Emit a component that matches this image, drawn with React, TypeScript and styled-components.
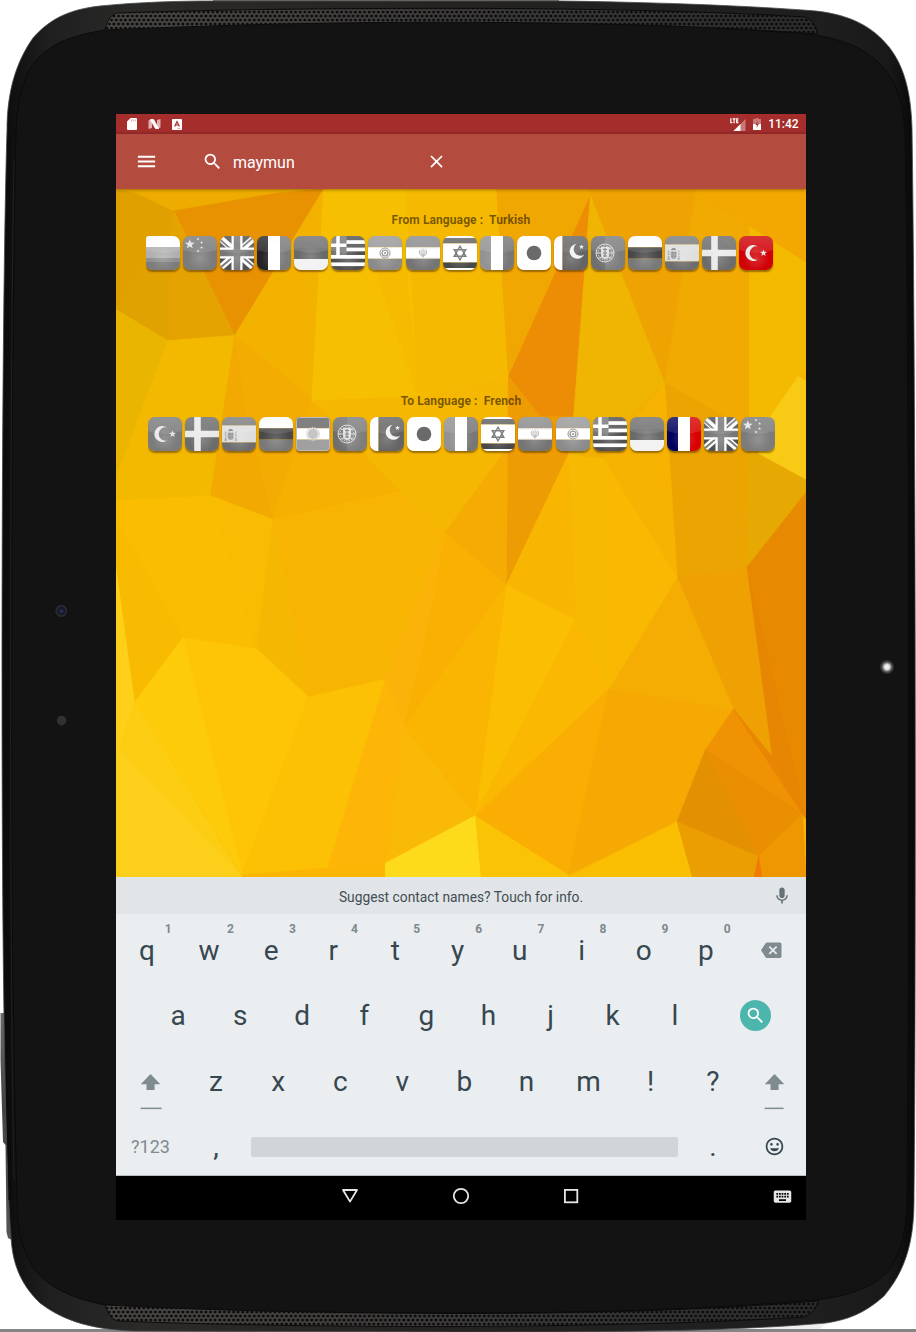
import React from "react";
import styled, { createGlobalStyle } from "styled-components";
import {
  MdMenu,
  MdSearch,
  MdClose,
  MdBackspace,
  MdMood,
  MdKeyboard,
} from "react-icons/md";

const GlobalStyle = createGlobalStyle`
  * { box-sizing: border-box; }
  html, body { margin: 0; padding: 0; background: #fff; }
  body { font-family: Roboto, "Liberation Sans", sans-serif; overflow: hidden; }
  svg { display: block; }
`;

const Device = styled.div`
  display: grid;
  width: 916px;
  height: 1332px;
  overflow: hidden;
`;

const FrameArt = styled.svg`
  grid-area: 1 / 1;
`;

const Screen = styled.main`
  grid-area: 1 / 1;
  z-index: 1;
  margin: 114px 0 0 116px;
  width: 690px;
  height: 1106px;
  display: flex;
  flex-direction: column;
  background: #000;
  overflow: hidden;
`;

const StatusBar = styled.div`
  height: 20px;
  flex: none;
  display: flex;
  align-items: center;
  justify-content: space-between;
  padding: 0 7.4px 0 11px;
  background: linear-gradient(#a52e2d 80%, #8f2928);
`;

const StatusGroup = styled.div<{ $gap: number }>`
  display: flex;
  align-items: center;
  gap: ${(p) => p.$gap}px;
`;

const Clock = styled.span`
  color: #fff;
  font-size: 12px;
  font-weight: 500;
  line-height: 20px;
`;

const AppBar = styled.header`
  height: 55px;
  flex: none;
  z-index: 1;
  display: flex;
  align-items: center;
  padding-left: 19px;
  color: #fff;
  background: #b44b3f;
  box-shadow: 0 1px 3px rgba(60, 30, 0, 0.45);
`;

const SearchField = styled.div`
  display: flex;
  align-items: center;
  width: 245.5px;
  margin-left: 43.6px;
  font-size: 16px;
`;

const Query = styled.span`
  flex: 1;
  padding: 1px 0 0 10.3px;
`;

const Content = styled.section`
  height: 688px;
  flex: none;
  display: grid;
`;

const Wallpaper = styled.svg`
  grid-area: 1 / 1;
  width: 690px;
  height: 688px;
`;

const Pickers = styled.div`
  grid-area: 1 / 1;
  z-index: 1;
  display: flex;
  flex-direction: column;
  gap: 121.7px;
  padding-top: 22.6px;
`;

const Picker = styled.div`
  display: flex;
  flex-direction: column;
  gap: 8.4px;
  height: 59.4px;
`;

const PickerLabel = styled.div`
  height: 16px;
  line-height: 16px;
  text-align: center;
  white-space: pre;
  font-size: 12px;
  font-weight: 700;
  letter-spacing: 0.1px;
  color: rgba(30, 20, 0, 0.6);
`;

const FlagStrip = styled.div<{ $start: number; $width: number }>`
  display: flex;
  gap: 3.06px;
  margin-left: ${(p) => p.$start}px;
  width: ${(p) => p.$width}px;
  padding-bottom: 4px;
  overflow: hidden;
  flex: none;
`;

const FlagTile = styled.span<{ $radius?: string }>`
  flex: none;
  width: 34px;
  height: 34px;
  border-radius: ${(p) => p.$radius ?? "7px"};
  overflow: hidden;
  box-shadow: 0 1.5px 1.5px rgba(70, 40, 0, 0.5);
`;

const Keyboard = styled.section`
  height: 299px;
  flex: none;
  display: flex;
  flex-direction: column;
  background: #eaeef1;
  box-shadow: inset 0 -1px #b9bec1;
`;

const Suggestion = styled.div`
  height: 37px;
  flex: none;
  display: grid;
  grid-template-columns: 48px 1fr 48px;
  align-items: center;
  justify-items: center;
  padding-top: 1px;
  background: #e1e5e8;
  color: #414d53;
  font-size: 13.8px;
`;

const MicSlot = styled.span`
  grid-column: 3;
  color: #667277;
`;

const SuggestionText = styled.span`
  grid-column: 2;
  padding-top: 2px;
`;

const KeyRow = styled.div<{ $indent?: number }>`
  height: 65.5px;
  display: flex;
  padding-left: ${(p) => p.$indent ?? 0}px;
`;

const Key = styled.div`
  position: relative;
  width: 62.1px;
  display: flex;
  align-items: center;
  justify-content: center;
  padding-top: 7px;
  font-size: 28px;
  color: #37474f;
`;

const Hint = styled.sup`
  position: absolute;
  right: 6.4px;
  top: 8px;
  line-height: 14px;
  font-size: 12px;
  font-weight: 700;
  color: #7d898d;
`;

const ActionKey = styled.div<{ $width: number; $dark?: boolean }>`
  width: ${(p) => p.$width}px;
  display: flex;
  align-items: center;
  justify-content: center;
  padding-top: 7px;
  font-size: 18px;
  color: ${(p) => (p.$dark ? "#37474f" : "#7f8b8f")};
`;

const ShiftKey = styled(ActionKey)`
  align-items: flex-end;
  padding-top: 0;
`;

const SpaceKey = styled.div`
  width: 434.7px;
  padding: 26px 4px 0 3.8px;

  &::before {
    content: "";
    display: block;
    height: 20.4px;
    border-radius: 2px;
    background: #d0d5d8;
  }
`;

const EnterButton = styled.span`
  display: flex;
  align-items: center;
  justify-content: center;
  width: 31px;
  height: 31px;
  border-radius: 50%;
  background: #4db6ac;
  color: #fff;
`;

const NavBar = styled.nav`
  height: 44px;
  flex: none;
  display: grid;
  grid-template-columns: 179px repeat(3, 110.4px) 1fr;
  align-items: center;
  justify-items: center;
  padding-bottom: 4px;
  background: #000;
  color: #e6e6e6;
`;

const NavSlot = styled.span<{ $column: number; $end?: boolean }>`
  grid-column: ${(p) => p.$column};
  justify-self: ${(p) => (p.$end ? "end" : "center")};
  padding-right: ${(p) => (p.$end ? 13 : 0)}px;
`;

const outline =
  "M7 130C7 92 16 62 33 38C52 16 74 9 100 6C140 2 180 1 213 1L559 1C640 2 740 5 816 11C850 15 872 26 889 47C904 66 911 92 912 128C916 400 916 1000 914 1200C914 1245 904 1272 884 1296C864 1314 846 1320 826 1323C720 1332 600 1332 456 1332L133 1331C85 1329 60 1318 40 1303C20 1284 12 1262 11 1236C4 1150 2 900 2 680C2 430 4 230 7 130Z";
const face =
  "M16 130C17 108 20 90 28 72C44 44 70 36 105 30C200 24 320 22 456 22C600 22 720 26 816 35C856 42 878 56 893 81C902 100 904 116 905 134C910 400 909 1000 907 1200C906 1232 902 1250 889 1270C874 1288 848 1296 816 1300C700 1310 580 1313 456 1313C320 1313 200 1311 105 1305C70 1298 46 1286 33 1267C21 1247 17 1230 17 1200C12 1000 11 800 12 600C12 400 14 240 16 130Z";
const topGrill =
  "M105 30C107 22 110 14 118 13C220 9.5 330 8.3 456 8.3C580 8.5 710 11 805 17C812 19 816 27 818 34C710 26 590 22.5 456 22.3C330 22 220 25 105 30Z";
const bottomGrill =
  "M105 1305C108 1314 112 1321 120 1321C220 1325 330 1326.5 456 1326.5C580 1326 710 1323 804 1317C812 1314 816 1308 819 1301C710 1310 590 1313.5 456 1313.5C330 1313 220 1311 105 1305Z";

function TabletFrame() {
  return (
    <FrameArt width="916" height="1332" viewBox="0 0 916 1332">
      <defs>
        <linearGradient id="shell" x1="0" y1="0" x2="1" y2="0">
          <stop offset="0" stopColor="#0b0b0b" />
          <stop offset="0.05" stopColor="#1f1f1f" />
          <stop offset="0.15" stopColor="#2b2a29" />
          <stop offset="0.5" stopColor="#242322" />
          <stop offset="0.9" stopColor="#1e1e1e" />
          <stop offset="0.97" stopColor="#191919" />
          <stop offset="1" stopColor="#070707" />
        </linearGradient>
        <linearGradient id="mesh" x1="0" y1="0" x2="1" y2="0">
          <stop offset="0" stopColor="#4c4947" />
          <stop offset="0.5" stopColor="#403e3d" />
          <stop offset="1" stopColor="#2e2e2e" />
        </linearGradient>
        <linearGradient id="rocker" x1="0" y1="0" x2="0" y2="1">
          <stop offset="0" stopColor="#6a6a6a" />
          <stop offset="0.4" stopColor="#444" />
          <stop offset="1" stopColor="#555" />
        </linearGradient>
        <pattern id="holes" width="4.6" height="8" patternUnits="userSpaceOnUse" y="2">
          <circle cx="1.2" cy="2" r="1.5" fill="#0b0b0b" />
          <circle cx="3.5" cy="6" r="1.5" fill="#0b0b0b" />
          <circle cx="-1.1" cy="6" r="1.5" fill="#0b0b0b" />
          <circle cx="5.8" cy="2" r="1.5" fill="#0b0b0b" />
        </pattern>
        <radialGradient id="led">
          <stop offset="0" stopColor="#fff" />
          <stop offset="0.35" stopColor="#ddd" />
          <stop offset="0.65" stopColor="#555" />
          <stop offset="1" stopColor="#131313" />
        </radialGradient>
      </defs>
      <rect y="1329" width="916" height="3" fill="#858585" />
      <path d="M213 0H559V3H213Z" fill="#747674" />
      <path d="M769 1327L826 1323L820 1329H760Z" fill="#eee" />
      <path d="M0.5 1013H6V1100L12 1240L8 1238L6.5 1232L5.5 1145L3 1142L0.5 1060Z" fill="url(#rocker)" />
      <path d={outline} fill="url(#shell)" stroke="#4a4a4a" strokeWidth="0.8" />
      <path d="M9 140C6 300 6 900 10 1200" fill="none" stroke="#0c0c0c" strokeWidth="3" />
      <path d={face} fill="#131313" stroke="#0b0b0b" strokeWidth="1" />
      <path d="M14 160C10 400 9 900 14 1180" fill="none" stroke="#242424" strokeWidth="1.2" opacity="0.8" />
      <path d={topGrill} fill="url(#mesh)" stroke="#0b0b0b" />
      <path d={topGrill} fill="url(#holes)" />
      <path d={bottomGrill} fill="url(#mesh)" stroke="#0b0b0b" />
      <path d={bottomGrill} fill="url(#holes)" />
      <circle cx="61.3" cy="611" r="5.2" fill="#171a24" stroke="#2a2d36" strokeWidth="1.6" />
      <circle cx="61.3" cy="611" r="2" fill="#2a2a55" />
      <circle cx="61.6" cy="720.6" r="4.8" fill="#323030" />
      <circle cx="887" cy="667" r="7.5" fill="url(#led)" />
    </FrameArt>
  );
}

/* Facets of the low-poly background, as [points, fill]. */
const facets: [string, string][] = [
  ["0,20 45,28 132,69 125,110 0,290", "#dfa000"],
  ["0,290 125,95 118,360", "#e0a200"],
  ["0,20 472,20 360,32 132,69 45,28", "#eeac00"],
  ["132,69 360,30 472,20 270,348", "#e99201"],
  ["130,69 270,348 118,360 125,110", "#e4a301"],
  ["0,290 118,360 0,665", "#eab500"],
  ["118,360 270,348 215,707 0,718 0,665", "#f3b900"],
  ["472,20 270,348 380,435 445,490", "#f4b200"],
  ["270,348 300,540 357,760 215,707", "#f2a902"],
  ["270,348 380,435 445,490 357,760 300,540", "#f3ad02"],
  ["472,20 865,20 880,200 892,440 687,485 445,495", "#f7bf02"],
  ["590,200 660,200 687,485", "#f6bb01"],
  ["660,20 865,20 892,440 687,485", "#f6b901"],
  ["445,495 687,485 892,440 890,600 748,790 645,697", "#f6b702"],
  ["445,495 645,697 357,760", "#f6b001"],
  ["865,20 1078,20 1078,35 892,440", "#f1a702"],
  ["1078,35 892,440 965,530 1040,530", "#ed8d05"],
  ["892,440 965,530 1040,530 1028,615 887,907", "#ee9c03"],
  ["748,790 890,600 887,907", "#f5ab03"],
  ["1078,20 1318,20 1318,35 1247,455 1078,35", "#eea302"],
  ["1078,35 1247,455 1107,625 1028,615 1040,530", "#efb502"],
  ["1247,455 1107,625 1060,618", "#f2b002"],
  ["1318,30 1440,100 1440,560 1247,455", "#f1aa02"],
  ["1318,20 1568,20 1568,185 1318,30", "#f2a701"],
  ["1440,105 1568,185 1568,430 1550,440 1480,540 1440,540", "#f4ba00"],
  ["1247,455 1440,560 1433,868 1275,890", "#eba402"],
  ["1247,455 1107,625 1275,890", "#f6b302"],
  ["1440,540 1480,540 1460,612 1568,670 1568,700 1433,868", "#e6a903"],
  ["1550,440 1568,450 1568,670 1460,612 1480,540", "#f8ca15"],
  ["1433,868 1568,700 1568,1430 1403,1185", "#e78a02"],
  ["1433,868 1568,1430 1490,1290", "#e68602"],
  ["1275,890 1433,868 1490,1290 1403,1185", "#efa003"],
  ["1275,890 1403,1185 1120,1140", "#f5ad03"],
  ["1107,625 1275,890 1120,1140 1115,960", "#f9b902"],
  ["1028,615 1107,625 1115,960 1120,1140 1045,985", "#f8b902"],
  ["887,907 1028,615 1045,985", "#f8b602"],
  ["887,907 1045,985 817,1423", "#fbbe02"],
  ["1045,985 1120,1140 817,1423", "#fab802"],
  ["0,718 215,707 320,1050 152,1025 0,760", "#fbbd02"],
  ["215,707 357,760 320,1050", "#f9bc02"],
  ["357,760 645,697 748,790 612,1118 437,1158", "#f8b403"],
  ["357,760 437,1158 320,1050", "#f6b702"],
  ["748,790 720,950 655,1225 612,1118", "#fbb30a"],
  ["748,790 887,907 655,1225 720,950", "#fab002"],
  ["887,907 655,1225 817,1423", "#fab502"],
  ["0,760 152,1025 42,1170 0,870", "#f9bb02"],
  ["0,870 42,1170 0,1300", "#fed01a"],
  ["152,1025 320,1050 437,1158 287,1557", "#fec507"],
  ["152,1025 42,1170 287,1557", "#fdcb0a"],
  ["42,1170 287,1561 0,1561 0,1300", "#fccd12"],
  ["0,1270 287,1561 0,1561", "#fbcf1a"],
  ["437,1158 612,1118 612,1530 287,1557", "#fcc005"],
  ["612,1118 655,1225 612,1530 480,1545", "#fdb607"],
  ["655,1225 817,1423 612,1530", "#fab807"],
  ["287,1557 612,1530 612,1561 287,1561", "#fcb504"],
  ["612,1530 817,1423 830,1561 612,1561", "#fddb1b"],
  ["817,1423 1028,1555 1028,1561 830,1561", "#fbc305"],
  ["817,1423 1120,1140 1028,1555", "#faae03"],
  ["1120,1140 1403,1185 1340,1275 1275,1437 1028,1555", "#f6a902"],
  ["1275,1437 1310,1561 1028,1561", "#fabe03"],
  ["1275,1437 1340,1275 1460,1515", "#e39002"],
  ["1340,1275 1403,1185 1560,1420", "#ef9203"],
  ["1340,1275 1560,1420 1460,1515", "#ea8f02"],
  ["1403,1185 1490,1290 1568,1430 1560,1420", "#e98604"],
  ["1275,1437 1460,1515 1450,1561 1310,1561", "#eb9e02"],
  ["1460,1515 1560,1420 1568,1561 1468,1561", "#ef9702"],
  ["1460,1515 1468,1561 1450,1561", "#f17a04"],
];

function Background() {
  return (
    <Wallpaper viewBox="0 20 1568 1541" preserveAspectRatio="none">
      <rect y="20" width="1568" height="1541" fill="#f7b502" />
      {facets.map(([points, fill], i) => (
        <polygon key={i} points={points} fill={fill} stroke={fill} strokeWidth="1.5" />
      ))}
    </Wallpaper>
  );
}

const Star = ({ x, y, r, fill = "#e4e4e4" }: { x: number; y: number; r: number; fill?: string }) => {
  const pts = Array.from({ length: 10 }, (_, i) => {
    const a = -Math.PI / 2 + (i * Math.PI) / 5;
    const q = i % 2 ? r * 0.42 : r;
    return `${(x + q * Math.cos(a)).toFixed(2)},${(y + q * Math.sin(a)).toFixed(2)}`;
  }).join(" ");
  return <polygon points={pts} fill={fill} />;
};

const bands = (colors: string[], stops: number[], vertical = false) =>
  colors.map((c, i) =>
    vertical ? (
      <rect key={i} x={stops[i]} width={stops[i + 1] - stops[i]} height="34" fill={c} />
    ) : (
      <rect key={i} y={stops[i]} width="34" height={stops[i + 1] - stops[i]} fill={c} />
    )
  );

const Crescent = () => (
  <path d="M19 10.5A8 8 0 1 0 19 23.5A6.7 6.7 0 1 1 19 10.5Z" fill="#e8e8e8" />
);

const flagArt: Record<string, React.ReactNode> = {
  argentinaCut: bands(["#fff", "#b0b0b0", "#8f8f8f", "#7c7c7c"], [0, 11, 22, 26, 34]),
  china: (
    <>
      <rect width="34" height="34" fill="#7b7b7b" />
      <Star x={6.8} y={8.3} r={5} />
      <Star x={15} y={3} r={1.6} />
      <Star x={18.6} y={6.5} r={1.6} />
      <Star x={18.6} y={11.5} r={1.6} />
      <Star x={15} y={15} r={1.6} />
    </>
  ),
  uk: (
    <>
      <rect width="34" height="34" fill="#505050" />
      <path d="M0 2L34 32M34 2L0 32" stroke="#fff" strokeWidth="6.5" />
      <path d="M0 3.5L14 16M34 1L20 13M0 32L14 20M34 31L20 19" stroke="#777" strokeWidth="1.8" />
      <path d="M17 0V34M0 17H34" stroke="#fff" strokeWidth="11" />
      <path d="M17 0V34M0 17H34" stroke="#777" strokeWidth="6.5" />
    </>
  ),
  franceGray: bands(["#252525", "#fff", "#7b7b7b"], [0, 11, 23, 34], true),
  france: bands(["#00005e", "#fff", "#d90000"], [0, 11, 23, 34], true),
  germany: bands(["#707070", "#6a6a6a", "#f2f2f2"], [0, 12, 23, 34]),
  greece: (
    <>
      <rect width="34" height="34" fill="#505050" />
      {[4.2, 11.6, 19, 26.4].map((y) => (
        <rect key={y} y={y} width="34" height="3.7" fill="#fff" />
      ))}
      <rect width="15.5" height="19" fill="#777" />
      <path d="M7 0V19M0 9.3H15.5" stroke="#fff" strokeWidth="3.5" />
    </>
  ),
  india: (
    <>
      {bands(["#999", "#fff", "#8a8a8a"], [0, 11.3, 22.7, 34])}
      <g fill="none" stroke="#888">
        <circle cx="17" cy="17" r="5" strokeWidth="1" />
        <circle cx="17" cy="17" r="2.9" strokeWidth="1.3" />
      </g>
      <circle cx="17" cy="17" r="1" fill="#777" />
    </>
  ),
  iran: (
    <>
      {bands(["#8c8c8c", "#fff", "#747474"], [0, 11.3, 22.7, 34])}
      <path d="M0 11.8H34M0 22.2H34" stroke="#ccc" strokeWidth="1" strokeDasharray="1 1" />
      <path d="M14.2 13.5Q11.5 18 16.8 20.5Q22.4 18 19.8 13.5M17 12.6V21.4M15.5 14.5Q14 18 17 19.2Q20 18 18.5 14.5" fill="none" stroke="#999" strokeWidth="0.8" />
    </>
  ),
  israel: (
    <>
      {bands(["#fff", "#606060", "#fff", "#484848", "#fff"], [0, 2, 7.5, 26.5, 32, 34])}
      <path d="M17 10.2L22.8 20.3H11.2ZM17 23.8L11.2 13.7H22.8Z" fill="none" stroke="#6c6c6c" strokeWidth="1.4" />
    </>
  ),
  italy: bands(["#929292", "#fff", "#777"], [0, 11, 23, 34], true),
  japan: (
    <>
      <rect width="34" height="34" fill="#fff" />
      <circle cx="17" cy="17" r="7.3" fill="#6a6a6a" />
    </>
  ),
  pakistan: (
    <>
      {bands(["#fff", "#646464"], [0, 8.5, 34], true)}
      <path d="M22.5 7.8A7.5 7.5 0 1 0 30 18.5A6.4 6.4 0 1 1 22.5 7.8Z" fill="#f2f2f2" />
      <Star x={27.5} y={11} r={2.6} fill="#f2f2f2" />
    </>
  ),
  portugal: (
    <>
      {bands(["#6e6e6e", "#7d7d7d"], [0, 14, 34], true)}
      <g fill="none" stroke="#ddd" strokeWidth="1">
        <circle cx="14" cy="17" r="9" />
        <circle cx="14" cy="17" r="7" strokeDasharray="1.6 1" />
        <path d="M5 17H23M7 11.5Q14 15.5 21 11.5M7 22.5Q14 18.5 21 22.5" />
      </g>
      <path d="M10 11H18V19Q18 23 14 23Q10 23 10 19Z" fill="#ddd" />
      <path d="M12 13.5H16M12 17H16M12 20H16M14 12V21" stroke="#777" strokeWidth="1.2" />
    </>
  ),
  russia: bands(["#fff", "#484848", "#787878"], [0, 11.3, 22.6, 34]),
  spain: (
    <>
      {bands(["#7c7c7c", "#dedede", "#6d6d6d"], [0, 8.5, 25.5, 34])}
      <path d="M3.6 14.5V22.5M13.8 14.5V22.5" stroke="#aaa" strokeWidth="1.4" strokeDasharray="2 0.8" />
      <path d="M2.4 23H5M12.6 23H15" stroke="#888" />
      <path d="M5.8 15.5H11.6V20Q11.6 23 8.6 23Q5.8 23 5.8 20Z" fill="#a4a4a4" />
      <path d="M6.4 13.6Q8.6 11 11 13.6ZM6.8 17H8.2M9.6 17H11M6.8 20.2H8.2M9.6 20.2H11" fill="#8a8a8a" stroke="#777" strokeWidth="0.9" />
    </>
  ),
  sweden: (
    <>
      <rect width="34" height="34" fill="#6c6c6c" />
      <path d="M12.5 0V34M0 17H34" stroke="#e9e9e9" strokeWidth="6.6" />
    </>
  ),
  turkeyGray: (
    <>
      <rect width="34" height="34" fill="#7b7b7b" />
      <Crescent />
      <Star x={24.5} y={17} r={3.6} />
    </>
  ),
  turkey: (
    <>
      <rect width="34" height="34" fill="#d00006" />
      <Crescent />
      <Star x={24.5} y={17} r={3.6} />
    </>
  ),
  argentina: (
    <>
      {bands(["#808080", "#fff", "#a0a0a0"], [0, 11.3, 22.6, 34])}
      <circle cx="17" cy="17" r="5" fill="#c4c4c4" />
      <circle cx="17" cy="17" r="6" fill="none" stroke="#d0d0d0" strokeWidth="2.4" strokeDasharray="1.2 1" />
      <rect x="0.5" y="0.5" width="33" height="33" rx="3" fill="none" stroke="#bbb" />
    </>
  ),
};

function Flag({ name }: { name: string }) {
  const radius = name === "argentina" ? "4px" : name === "argentinaCut" ? "3px 7px 7px 6px" : undefined;
  const flat = name === "japan" || name === "argentina";
  return (
    <FlagTile $radius={radius}>
      <svg width="34" height="34" viewBox="0 0 34 34">
        {flagArt[name]}
        {!flat && (
          <>
            <rect width="34" height="34" fill="url(#tileShade)" />
            <path d="M0 0H34V14Q17 20 0 14Z" fill="url(#tileGloss)" />
          </>
        )}
      </svg>
    </FlagTile>
  );
}

const FlagDefs = () => (
  <svg width="0" height="0" style={{ position: "absolute" }}>
    <defs>
      <radialGradient id="tileShade" cx="0.5" cy="0.65" r="0.65">
        <stop offset="0" stopColor="#fff" stopOpacity="0.18" />
        <stop offset="0.6" stopColor="#fff" stopOpacity="0" />
        <stop offset="1" stopColor="#000" stopOpacity="0.02" />
      </radialGradient>
      <linearGradient id="tileGloss" x1="0" y1="0" x2="0" y2="1">
        <stop offset="0" stopColor="#fff" stopOpacity="0.2" />
        <stop offset="1" stopColor="#fff" stopOpacity="0.1" />
      </linearGradient>
    </defs>
  </svg>
);

const fromFlags = [
  "argentinaCut", "china", "uk", "franceGray", "germany", "greece", "india", "iran", "israel",
  "italy", "japan", "pakistan", "portugal", "russia", "spain", "sweden", "turkey",
];
const toFlags = [
  "turkeyGray", "sweden", "spain", "russia", "argentina", "portugal", "pakistan", "japan", "italy",
  "israel", "iran", "india", "greece", "germany", "france", "uk", "china",
];

const ShiftIcon = ({ line }: { line: number }) => (
  <svg width="22" height="38" viewBox="0 0 22 38" fill="#7f8b8f">
    <path d="M10.5 1L20.3 11.3H14.6V17H6.5V11.3H0.8Z" />
    <rect x="0.6" y="34.6" width={line} height="1.5" />
  </svg>
);

const MicIcon = () => (
  <svg width="20" height="20" viewBox="0 0 24 24" fill="currentColor">
    <path d="M12 14.5c1.8 0 3.2-1.4 3.2-3.2V5c0-1.800-1.400-3.200-3.200-3.200S8.800 3.200 8.800 5v6.300c0 1.800 1.400 3.200 3.200 3.200z" />
    <path d="M17.300 11c0 3-2.540 5.100-5.300 5.100S6.700 14 6.700 11H5c0 3.410 2.720 6.230 6 6.720V21h2v-3.280c3.280-.480 6-3.300 6-6.720h-1.700z" />
  </svg>
);

export default function App() {
  return (
    <Device>
      <GlobalStyle />
      <TabletFrame />
      <Screen>
        <StatusBar>
          <StatusGroup $gap={11}>
            <svg width="10" height="12" viewBox="0 0 10 12">
              <path d="M3.6 0H9Q10 0 10 1V11Q10 12 9 12H1Q0 12 0 11V3.6Z" fill="#fff" />
              <path d="M4.5 1.500V3.300M6.300 1.500V3.300M8.100 1.500V3.300" stroke="#d99" strokeWidth="0.9" />
            </svg>
            <svg width="13" height="10" viewBox="0 0 13 10">
              <path d="M0.500 1.500L4 0V9L0.500 10ZM9 1L12.500 0V8.500L9 10Z" fill="#e3b0b0" />
              <path d="M2.500 0.500H5.500L10.500 9.500H7.500Z" fill="#fff" stroke="#fff" />
            </svg>
            <svg width="10" height="11" viewBox="0 0 10 11">
              <rect width="10" height="11" rx="0.8" fill="#fff" />
              <path d="M2.600 7.600L5 2.600L7.400 7.600M3.400 6H6.600" stroke="#a52e2d" strokeWidth="1.2" fill="none" />
              <path d="M5 9.400H8.600" stroke="#d99" strokeWidth="0.8" />
            </svg>
          </StatusGroup>
          <StatusGroup $gap={7}>
            <svg width="16" height="13" viewBox="0 0 16 13">
              <path d="M15.500 1V13H3.500Z" fill="#c87a79" />
              <path d="M10.500 6V13H3.500Z" fill="#fff" />
              <path d="M0.800 0.300V4.700H2.400M2.600 0.900H5.600M4.100 0.900V5.200M8.400 0.900H6.700V4.700H8.400M6.700 2.800H8.200" fill="none" stroke="#fff" strokeWidth="1.2" />
            </svg>
            <svg width="8" height="12" viewBox="0 0 8 12">
              <path d="M2.500 0H5.500V1H8V12H0V1H2.500Z" fill="#c87a79" />
              <path d="M0 6H8V12H0Z" fill="#fff" />
              <path d="M4.600 3L2.400 7H4L3.400 10L5.800 6H4.300Z" fill="#a52e2d" />
            </svg>
            <Clock>11:42</Clock>
          </StatusGroup>
        </StatusBar>
        <AppBar>
          <MdMenu size={23} />
          <SearchField>
            <MdSearch size={21} />
            <Query>maymun</Query>
            <MdClose size={21} />
          </SearchField>
        </AppBar>
        <Content>
          <Background />
          <Pickers>
            <FlagDefs />
            <Picker>
              <PickerLabel>{"From Language :  Turkish"}</PickerLabel>
              <FlagStrip $start={30.2} $width={630}>
                {fromFlags.map((f) => (
                  <Flag key={f} name={f} />
                ))}
              </FlagStrip>
            </Picker>
            <Picker>
              <PickerLabel>{"To Language :  French"}</PickerLabel>
              <FlagStrip $start={32} $width={626.5}>
                {toFlags.map((f) => (
                  <Flag key={f} name={f} />
                ))}
              </FlagStrip>
            </Picker>
          </Pickers>
        </Content>
        <Keyboard>
          <Suggestion>
            <SuggestionText>Suggest contact names? Touch for info.</SuggestionText>
            <MicSlot>
              <MicIcon />
            </MicSlot>
          </Suggestion>
          <KeyRow>
            {[..."qwertyuiop"].map((k, i) => (
              <Key key={k}>
                {k}
                <Hint>{(i + 1) % 10}</Hint>
              </Key>
            ))}
            <ActionKey $width={69}>
              <MdBackspace size={20.5} />
            </ActionKey>
          </KeyRow>
          <KeyRow $indent={31}>
            {[..."asdfghjkl"].map((k) => (
              <Key key={k}>{k}</Key>
            ))}
            <ActionKey $width={100}>
              <EnterButton>
                <MdSearch size={21} />
              </EnterButton>
            </ActionKey>
          </KeyRow>
          <KeyRow>
            <ShiftKey $width={69}>
              <ShiftIcon line={21} />
            </ShiftKey>
            {[..."zxcvbnm!?"].map((k) => (
              <Key key={k}>{k}</Key>
            ))}
            <ShiftKey $width={62}>
              <ShiftIcon line={19} />
            </ShiftKey>
          </KeyRow>
          <KeyRow>
            <ActionKey $width={69}>?123</ActionKey>
            <Key>,</Key>
            <SpaceKey />
            <Key>.</Key>
            <ActionKey $width={62} $dark>
              <MdMood size={21} />
            </ActionKey>
          </KeyRow>
        </Keyboard>
        <NavBar>
          <NavSlot $column={2}>
            <svg width="18" height="16" viewBox="0 0 18 16">
              <path d="M2 2H16L9 13.600Z" fill="none" stroke="currentColor" strokeWidth="1.8" strokeLinejoin="round" />
            </svg>
          </NavSlot>
          <NavSlot $column={3}>
            <svg width="18" height="18" viewBox="0 0 18 18">
              <circle cx="9" cy="9" r="7.2" fill="none" stroke="currentColor" strokeWidth="1.8" />
            </svg>
          </NavSlot>
          <NavSlot $column={4}>
            <svg width="16" height="16" viewBox="0 0 16 16">
              <rect x="1.9" y="1.9" width="12.4" height="12.4" fill="none" stroke="currentColor" strokeWidth="1.8" />
            </svg>
          </NavSlot>
          <NavSlot $column={5} $end>
            <MdKeyboard size={21} />
          </NavSlot>
        </NavBar>
      </Screen>
    </Device>
  );
}
